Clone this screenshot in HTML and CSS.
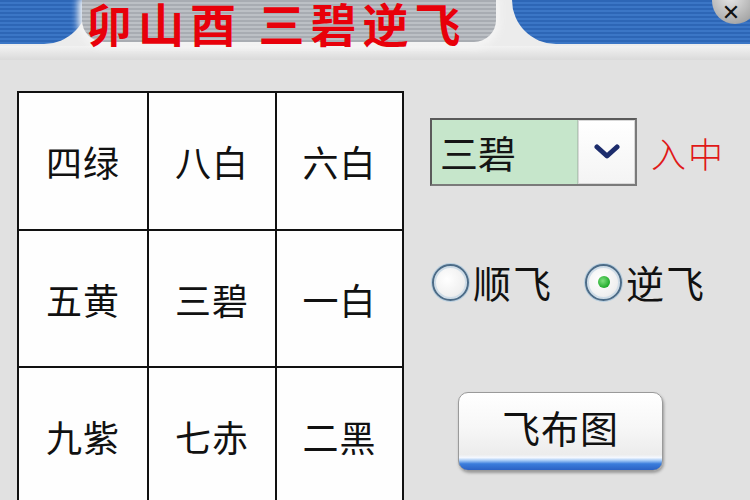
FILE: index.html
```html
<!DOCTYPE html>
<html lang="zh-CN">
<head>
<meta charset="utf-8">
<title>卯山酉 三碧逆飞</title>
<link rel="stylesheet" href="styles.css">
</head>
<body>
<div class="window">
  <div class="titlebar">
    <div class="blue blue-left"></div>
    <div class="tab"><span class="title">卯山酉 三碧逆飞</span></div>
    <div class="blue blue-right"></div>
    <div class="close"><span>✕</span></div>
  </div>
  <div class="strip"></div>
  <div class="main">
    <div class="grid">
      <div class="cell">四绿</div>
      <div class="cell">八白</div>
      <div class="cell">六白</div>
      <div class="cell">五黄</div>
      <div class="cell">三碧</div>
      <div class="cell">一白</div>
      <div class="cell">九紫</div>
      <div class="cell">七赤</div>
      <div class="cell">二黑</div>
    </div>
    <div class="panel">
      <div class="combo-row">
        <div class="combo">
          <div class="combo-value">三碧</div>
          <div class="combo-btn">
            <svg width="26" height="18" viewBox="0 0 26 18"><path d="M3 4 L13 13 L23 4" fill="none" stroke="#1c2c6c" stroke-width="5" stroke-linecap="round" stroke-linejoin="round"/></svg>
          </div>
        </div>
        <span class="ruzhong">入中</span>
      </div>
      <div class="radio-row">
        <label class="radio"><span class="dot"></span>顺飞</label>
        <label class="radio checked"><span class="dot"></span>逆飞</label>
      </div>
      <div class="btn">飞布图</div>
    </div>
  </div>
</div>
</body>
</html>
```

FILE: styles.css
```css
html, body {
  margin: 0;
  padding: 0;
}
body {
  width: 750px;
  height: 500px;
  overflow: hidden;
  background: #e1e1e1;
  font-family: "Noto Sans CJK SC", "Noto Sans", sans-serif;
}
.window {
  display: flex;
  flex-direction: column;
  height: 500px;
}
.titlebar {
  position: relative;
  display: flex;
  height: 46px;
  background: #ececec;
  flex: none;
}
.blue {
  height: 44px;
  background: repeating-linear-gradient(180deg, #2d66b6 0px, #2d66b6 2px, #3b76c6 2px, #3b76c6 4px);
}
.blue-left {
  width: 88px;
  border-bottom-right-radius: 44px;
}
.blue-right {
  flex: 1;
  margin-left: 16px;
  border-bottom-left-radius: 50px;
}
.tab {
  width: 414px;
  height: 42px;
  margin-left: -6px;
  border-radius: 0 0 22px 22px;
  background: repeating-linear-gradient(180deg, #a8acb2 0px, #a8acb2 2px, #bcc0c5 2px, #bcc0c5 4px);
  box-shadow: 0 2px 7px 4px #f4f4f4;
  overflow: visible;
  white-space: nowrap;
}
.title {
  display: block;
  padding-left: 4px;
  margin-top: 0;
  font-size: 46px;
  line-height: 44px;
  font-weight: bold;
  color: #e8000a;
  letter-spacing: 6px;
}
.close {
  position: absolute;
  right: -8px;
  top: -22px;
  width: 46px;
  height: 46px;
  border-radius: 50%;
  background: radial-gradient(circle at 40% 40%, #e8e8e8, #a9a9a9 70%, #8a8a8a);
  display: flex;
  align-items: flex-end;
  justify-content: center;
}
.close span {
  font-size: 22px;
  line-height: 22px;
  font-weight: bold;
  color: #111;
  margin-right: 8px;
  font-family: "DejaVu Sans", sans-serif;
}
.strip {
  height: 14px;
  flex: none;
  background: linear-gradient(180deg, #f2f2f2, #dadada);
}
.main {
  display: flex;
  padding: 31px 0 0 17px;
}
.grid {
  display: grid;
  grid-template-columns: 128px 126px 125px;
  grid-template-rows: 136px 135px 136px;
  gap: 2px;
  padding: 2px;
  background: #111;
  flex: none;
  align-self: flex-start;
}
.cell {
  background: #fefefe;
  display: flex;
  align-items: center;
  justify-content: center;
  font-size: 36px;
  color: #111;
  letter-spacing: 1px;
}
.panel {
  display: flex;
  flex-direction: column;
  margin-left: 26px;
  padding-top: 27px;
}
.combo-row {
  display: flex;
  align-items: center;
}
.combo {
  display: flex;
  width: 203px;
  height: 64px;
  border: 2px solid #5a5a5a;
  border-right-color: #7a7a7a;
  border-bottom-color: #7a7a7a;
  box-shadow: inset 1px 1px 0 #9a9a9a;
  background: #fff;
}
.combo-value {
  width: 146px;
  background: #c6e6cb;
  border-right: 1px solid #b0c8b4;
  font-size: 38px;
  line-height: 64px;
  padding-left: 8px;
  box-sizing: border-box;
  color: #151515;
}
.combo-btn {
  flex: 1;
  display: flex;
  align-items: center;
  justify-content: center;
  background: linear-gradient(180deg, #ffffff, #f4f4f4);
  border: 1px solid #d8d8d8;
}
.ruzhong {
  margin-left: 14px;
  font-size: 35px;
  color: #e01818;
  font-weight: 300;
  letter-spacing: 2px;
}
.radio-row {
  display: flex;
  align-items: center;
  margin-top: 76px;
  margin-left: 2px;
}
.radio {
  display: flex;
  align-items: center;
  font-size: 38px;
  line-height: 40px;
  color: #111;
  letter-spacing: 2px;
}
.radio + .radio {
  margin-left: 32px;
}
.dot {
  width: 37px;
  height: 37px;
  border-radius: 50%;
  border: 2px solid #4c6c88;
  box-shadow: 0 0 0 1px #b8cfe0, inset 0 0 0 2px #cfdde8;
  background: radial-gradient(circle at 40% 40%, #ffffff, #f0f0f0 60%, #dcdcdc);
  margin-right: 4px;
  box-sizing: border-box;
  display: flex;
  align-items: center;
  justify-content: center;
}
.checked .dot::after {
  content: "";
  width: 12px;
  height: 12px;
  border-radius: 50%;
  background: radial-gradient(circle at 40% 40%, #7ee07e, #1faa2a 70%);
}
.btn {
  margin-top: 90px;
  margin-left: 28px;
  width: 205px;
  height: 79px;
  box-sizing: border-box;
  border: 1px solid #9a9a9a;
  border-radius: 10px;
  background: linear-gradient(180deg, #ffffff 0%, #f7f7f7 45%, #ececec 80%, #f4f8ff 84%, #9cc4f4 88%, #3b7ddc 92%, #2c62c4 100%);
  box-shadow: 1px 2px 3px #9a9a9a;
  display: flex;
  align-items: center;
  justify-content: center;
  padding-bottom: 10px;
  font-size: 38px;
  color: #111;
  letter-spacing: 1px;
}
```
